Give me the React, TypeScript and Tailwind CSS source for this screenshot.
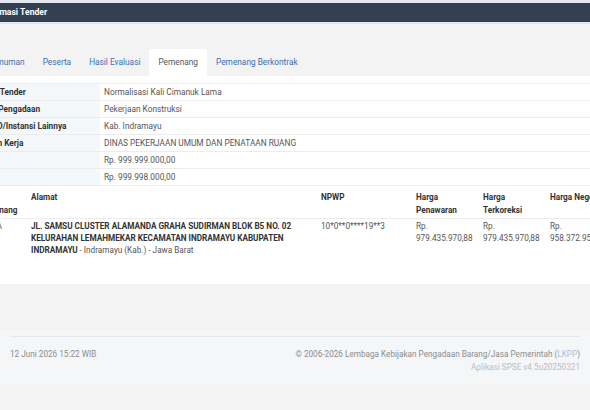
import React from "react";

const rows: [string, string][] = [
  ["Nama Tender", "Normalisasi Kali Cimanuk Lama"],
  ["Jenis Pengadaan", "Pekerjaan Konstruksi"],
  ["K/L/PD/Instansi Lainnya", "Kab. Indramayu"],
  ["Satuan Kerja", "DINAS PEKERJAAN UMUM DAN PENATAAN RUANG"],
  ["Pagu", "Rp. 999.999.000,00"],
  ["HPS", "Rp. 999.998.000,00"],
];

const tabs = ["Pengumuman", "Peserta", "Hasil Evaluasi", "Pemenang", "Pemenang Berkontrak"];

export default function App() {
  return (
    <div className="w-[590px] h-[410px] overflow-hidden bg-[#f3f3f3] font-['Roboto',sans-serif] text-[8.3px]">
      <div className="h-[3px] bg-[#e4e8ee]" />
      <div className="h-[19px] bg-[#343f52] flex items-center">
        <span className="-ml-[19px] text-white font-bold text-[8.6px]">Informasi Tender</span>
      </div>
      <div className="h-[2px] bg-[#dfe5ec]" />

      <div className="-ml-[32px] w-[720px]">
        <div className="pt-[25px] flex items-end -ml-[4px] h-[52px] text-[8.3px]">
          {tabs.map((t) => (
            <div
              key={t}
              className={
                t === "Pemenang"
                  ? "h-[27px] px-[9px] flex items-center bg-white text-[#555]"
                  : "h-[27px] px-[9px] flex items-center text-[#3b6fb0]"
              }
            >
              {t}
            </div>
          ))}
        </div>

        <div className="bg-white pt-[7px] pb-[28px]">
          <div className="border-t border-[#ececec] text-[8.3px]">
            {rows.map(([l, v]) => (
              <div key={l} className="grid grid-cols-[132px_1fr] h-[17px] border-b border-[#ececec]">
                <div className="bg-[#f5f8fb] pl-[8px] flex items-center font-bold text-[#333]">{l}</div>
                <div className="pl-[4px] flex items-center text-[#555]">{v}</div>
              </div>
            ))}
          </div>

          <div className="pl-[6px]">
            <div className="grid grid-cols-[53px_290px_95px_67px_67px_110px] text-[8.2px] leading-[12.5px] border-b border-[#ececec] pt-[5px] pb-[2px] font-bold text-[#333]">
              <div className="px-[4px]">Nama Pemenang</div>
              <div className="px-[4px]">Alamat</div>
              <div className="px-[4px]">NPWP</div>
              <div className="px-[4px]">Harga<br />Penawaran</div>
              <div className="px-[4px]">Harga<br />Terkoreksi</div>
              <div className="px-[4px] whitespace-nowrap">Harga Negosiasi</div>
            </div>
            <div className="grid grid-cols-[53px_290px_95px_67px_67px_110px] text-[8.2px] leading-[12px] pt-[1px] text-[#555]">
              <div className="px-[4px] whitespace-nowrap">PT. KA</div>
              <div className="px-[4px] whitespace-nowrap">
                <span className="font-bold text-[#333]">
                  JL. SAMSU CLUSTER ALAMANDA GRAHA SUDIRMAN BLOK B5 NO. 02<br />
                  KELURAHAN LEMAHMEKAR KECAMATAN INDRAMAYU KABUPATEN<br />
                  INDRAMAYU
                </span>{" "}
                - Indramayu (Kab.) - Jawa Barat
              </div>
              <div className="px-[4px]">10*0**0****19**3</div>
              <div className="px-[4px]">Rp.<br />979.435.970,88</div>
              <div className="px-[4px]">Rp.<br />979.435.970,88</div>
              <div className="px-[4px]">Rp.<br />958.372.950,00</div>
            </div>
          </div>
        </div>
      </div>

      <div className="mt-[46px] h-[55px] bg-[#f5f6f8] pt-[6px]">
        <div className="mx-[10px] border-t border-[#e6e9ee] pt-[11px] flex justify-between leading-[13px] text-[8.2px]">
          <div className="text-[#8c8c8c]">12 Juni 2026 15:22 WIB</div>
          <div className="text-right">
            <div className="text-[#8c8c8c]">
              © 2006-2026 Lembaga Kebijakan Pengadaan Barang/Jasa Pemerintah (<span className="text-[#a9bfdc]">LKPP</span>)
            </div>
            <div className="text-[#bdbdbd]">Aplikasi SPSE v4.5u20250321</div>
          </div>
        </div>
      </div>
    </div>
  );
}
